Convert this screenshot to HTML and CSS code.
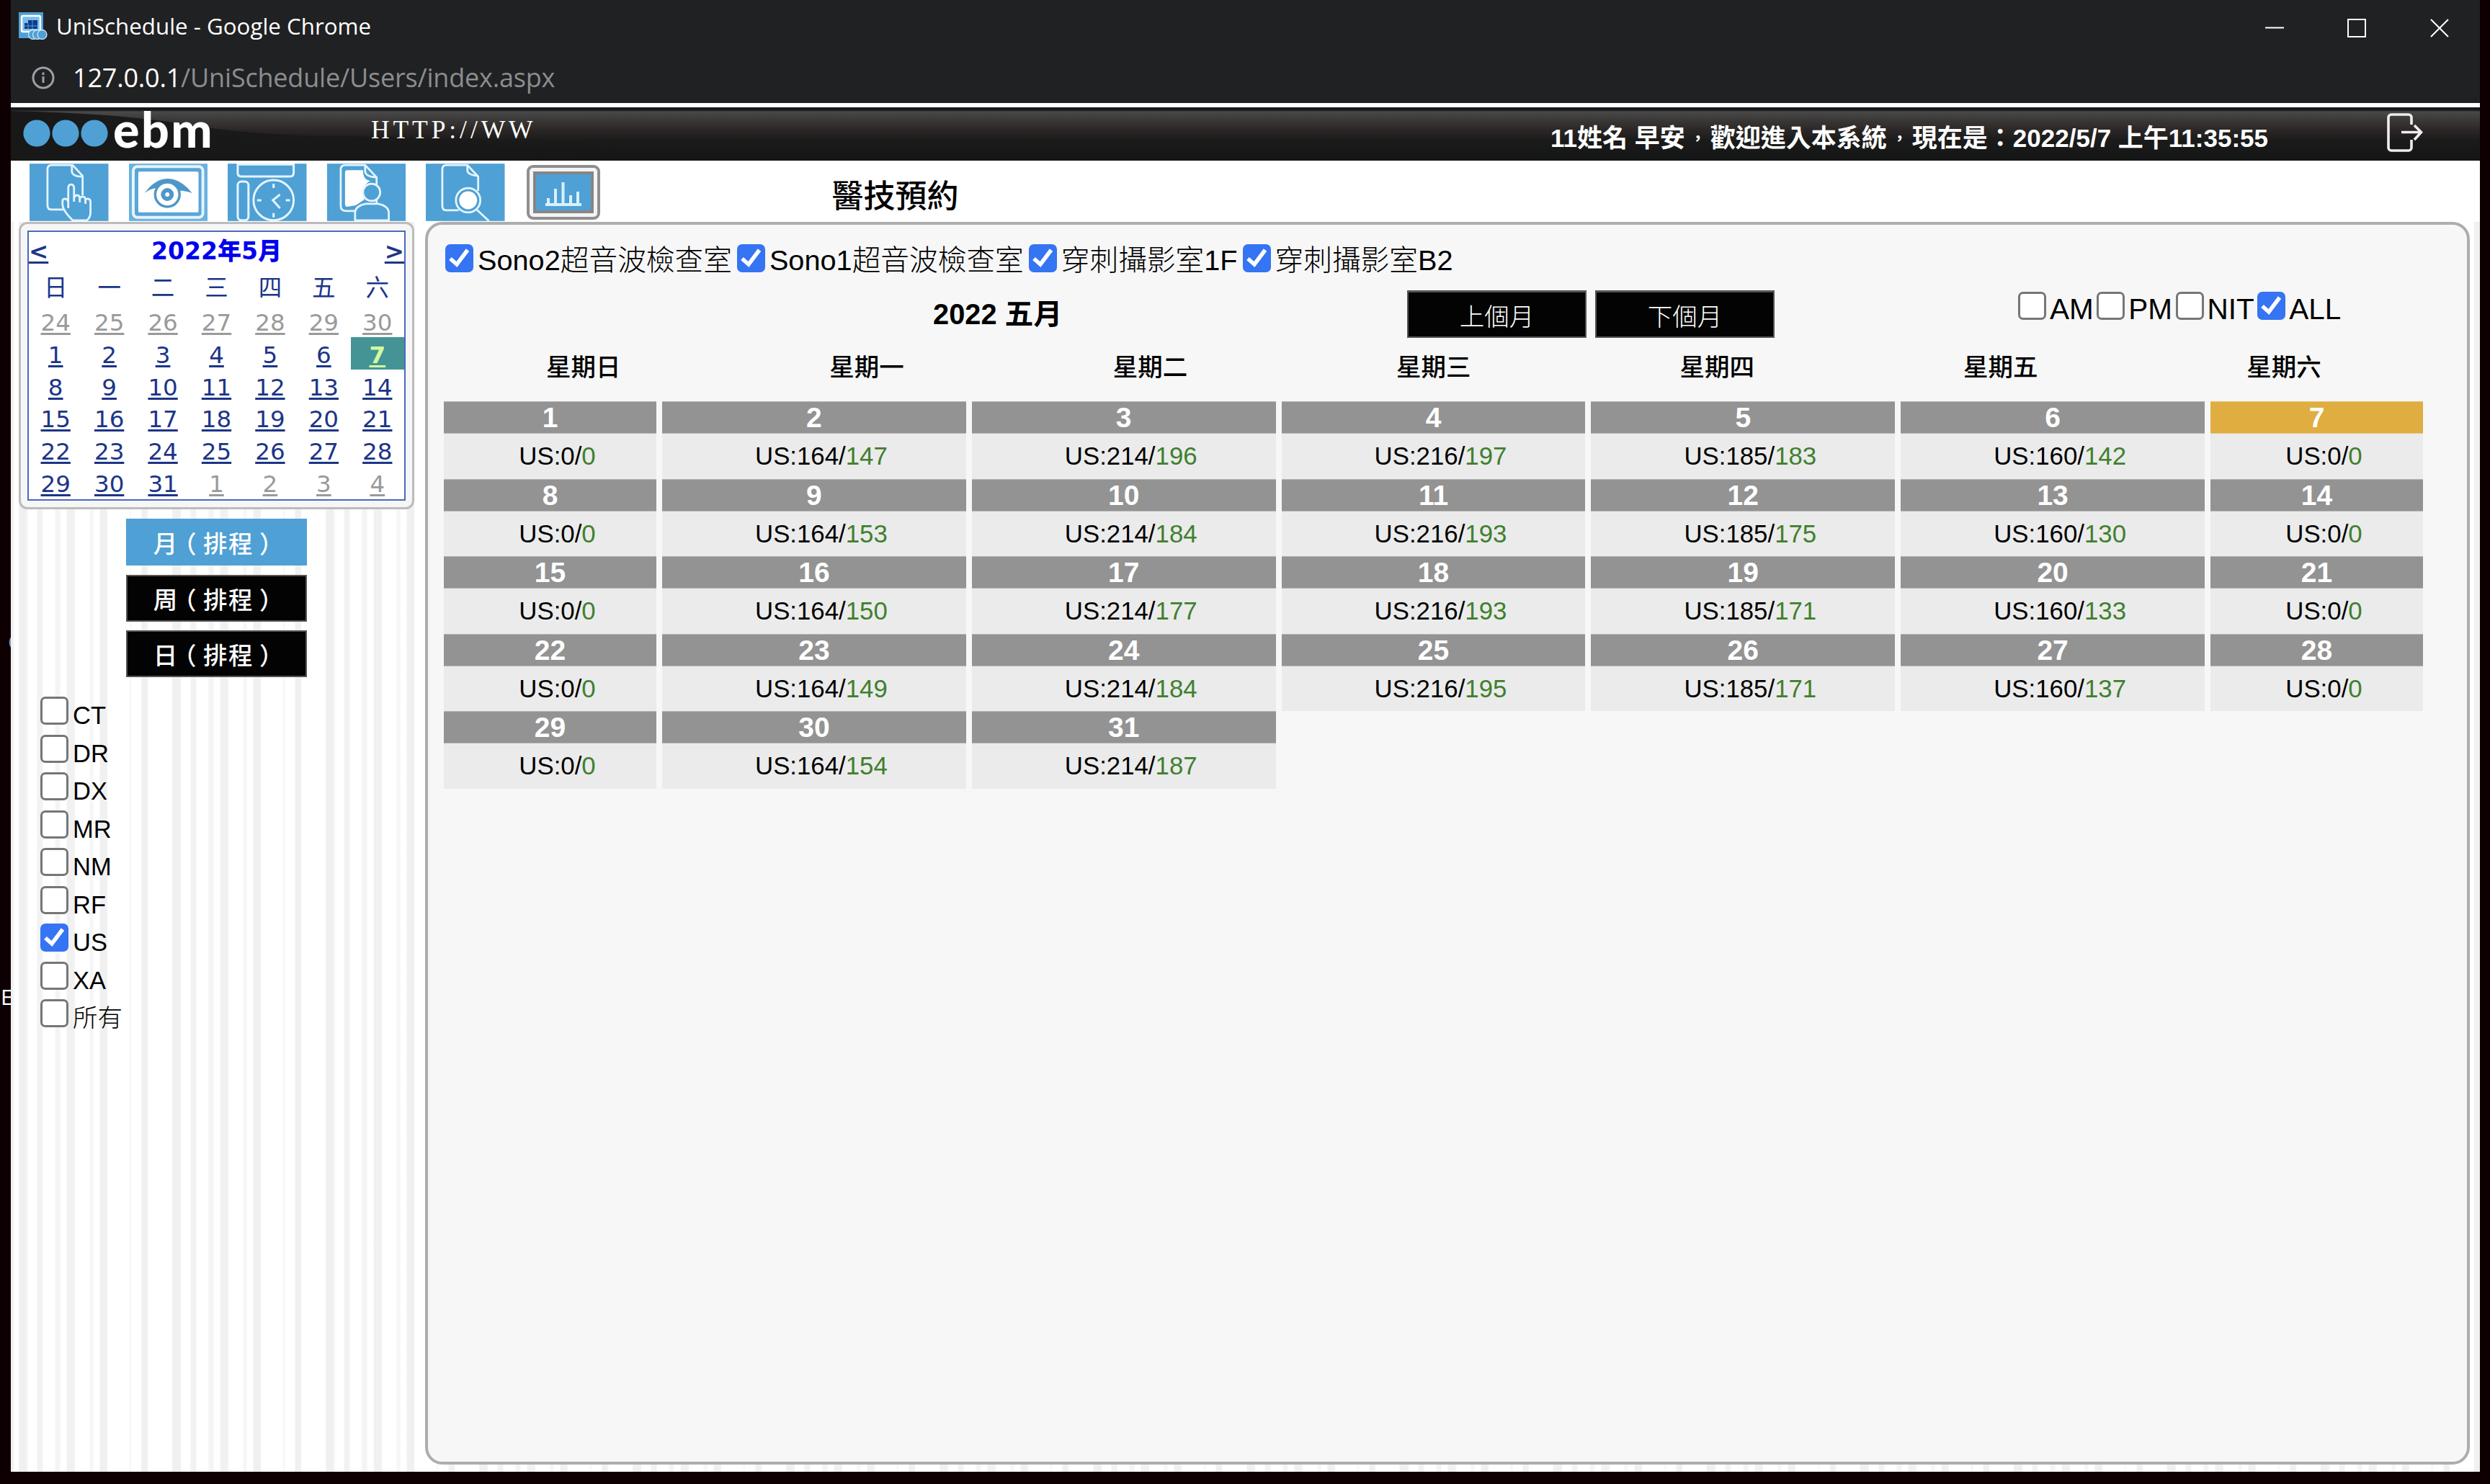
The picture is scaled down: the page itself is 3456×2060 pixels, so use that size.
FILE: index.html
```html
<!DOCTYPE html>
<html lang="zh-TW">
<head>
    <meta charset="UTF-8">
    <title>UniSchedule</title>
    <link rel="stylesheet" href="styles.css">
</head>
<body>
<span class="desk-label desk-c">C</span>
<span class="desk-label desk-e">E</span>
<div class="window">
    <div class="title-bar">
        <svg class="favicon" viewBox="0 0 40 38">
            <rect width="34" height="36" fill="#4fa0d4"/>
            <rect x="4" y="5" width="26" height="22" rx="2" fill="#7cc0e8" stroke="#fff" stroke-width="2.5"/>
            <path d="M13 11h13v12H8v-8h5z" fill="#123a8c"/>
            <path d="M8 19h18M13 15v8M19 11v12" stroke="#4fa0d4" stroke-width="1"/>
            <g fill="#4fa0d4" stroke="#c9e8fa" stroke-width="1.3"><circle cx="20" cy="31" r="6.5"/><circle cx="26" cy="31" r="6.5"/><circle cx="32.5" cy="31" r="6.5"/></g>
        </svg>
        <span class="title-text">UniSchedule - Google Chrome</span>
        <svg class="win-btns" viewBox="0 0 256 26" fill="none" stroke="#fff" stroke-width="2">
            <path d="M0 12.5h26M115 1h24v24h-24zM230 1l24 24M254 1l-24 24"/>
        </svg>
    </div>
    <div class="address-bar">
        <svg class="info" viewBox="0 0 32 32" fill="none" stroke="#9aa0a6" stroke-width="3">
            <circle cx="16" cy="16" r="14"/><path d="M16 14v9M16 8.5v3.5"/>
        </svg>
        <span class="url">127.0.0.1<span class="path">/UniSchedule/Users/index.aspx</span></span>
    </div>
    <div class="header">
        <svg class="gloss" viewBox="0 0 1000 70" preserveAspectRatio="none">
            <defs><linearGradient id="fade" x1="0" x2="1" y1="0" y2="0"><stop offset="0" stop-color="#181818"/><stop offset=".45" stop-color="#181818" stop-opacity=".8"/><stop offset="1" stop-color="#181818" stop-opacity="0"/></linearGradient></defs>
            <path d="M0 0Q150 3 250 20T520 36Q700 44 1000 44V70H0z" fill="url(#fade)"/>
        </svg>
        <div class="logo">
            <svg viewBox="0 0 118 38" fill="#4fa0d4"><circle cx="19" cy="19" r="18.6"/><circle cx="59" cy="19" r="18.6"/><circle cx="99" cy="19" r="18.6"/></svg>
            <span>ebm</span>
        </div>
        <div class="marquee">HTTP://WW</div>
        <div class="welcome">11姓名 早安<span class="dot">，</span>歡迎進入本系統<span class="dot">，</span>現在是：2022/5/7 上午11:35:55</div>
        <svg class="logout" viewBox="0 0 50 54" fill="none" stroke="#eee" stroke-width="3.6">
            <path d="M34 16V6a4 4 0 0 0-4-4H6a4 4 0 0 0-4 4v42a4 4 0 0 0 4 4h24a4 4 0 0 0 4-4V37M20 26.500h27M38 17l9.500 9.500L38 37"/>
        </svg>
    </div>
    <div class="toolbar">
        <svg class="tool" viewBox="0 0 110 80">
            <rect width="110" height="80" fill="#4fa0d4"/>
            <g fill="none" stroke="#e4f5ff" stroke-width="2.800" stroke-linejoin="round">
                <path d="M48 64H31q-6 0-6-6V8q0-6 6-6h29l14 15v27"/><path d="M59 2v9q1 7 14 7"/>
                <path d="M54 62V34q0-5 4-5t4 5v14q1-4 4-4 4 0 4 5 1-3 4-3 4 0 4 5 1-2 3-2 4 0 4 5v14q0 7-5 11H60Q47 66 46 58V52q0-3 4-3 4 1 4 6" fill="#4fa0d4"/>
                <path d="M62 48v5M70 49v5M78 51v5"/>
            </g>
        </svg>
        <svg class="tool" viewBox="0 0 110 80">
            <rect width="110" height="80" fill="#69b1e0"/>
            <rect x="6" y="4" width="97" height="71" rx="6" fill="#5aa5d8" stroke="#e6f4fe" stroke-width="4"/>
            <rect x="13" y="11" width="84" height="57" rx="2" fill="#fff"/>
            <path d="M22 41Q36 21 54 21 72 21 88 41 78 37 70 38L39 34Q31 34 22 41z" fill="#4f97c8"/>
            <circle cx="53.500" cy="43" r="17" fill="#fff" stroke="#4f97c8" stroke-width="3.500"/>
            <circle cx="53.500" cy="43" r="6" fill="#fff" stroke="#4f97c8" stroke-width="6"/>
        </svg>
        <svg class="tool" viewBox="0 0 110 80">
            <rect width="110" height="80" fill="#4fa0d4"/>
            <g fill="none" stroke="#e4f5ff" stroke-width="3">
                <path d="M14 1v12q0 5 5 5h68q5 0 5-5V1z"/><rect x="14" y="25" width="15" height="54" rx="5"/>
                <circle cx="64" cy="51" r="28"/><path d="M64 28v6M64 69v6M41 51h6M81 51h6M73 43l-10 8 10 11"/>
            </g>
        </svg>
        <svg class="tool" viewBox="0 0 110 80">
            <rect width="110" height="80" fill="#4fa0d4"/>
            <path d="M28 9h22q0 14 10 15-10 6-11 18l3 8-12 8-12 2q-3 0-3-4V12q0-3 3-3z" fill="#fff"/>
            <g fill="none" stroke="#e4f5ff" stroke-width="2.800" stroke-linejoin="round">
                <path d="M40 66H27q-8 0-8-7V8q0-6 7-6h27l16 17v37"/><path d="M53 2v9q1 7 15 8"/>
                <circle cx="62" cy="40" r="12" fill="#4fa0d4"/>
                <path d="M39 79V69q0-10 15-13h17q15 3 15 13v10z" fill="#4fa0d4"/>
            </g>
        </svg>
        <svg class="tool" viewBox="0 0 110 80">
            <rect width="110" height="80" fill="#4fa0d4"/>
            <g fill="none" stroke="#e4f5ff" stroke-width="2.800" stroke-linejoin="round">
                <path d="M46 65H29q-6 0-6-6V8q0-6 6-6h29l15 16v20"/><path d="M58 2v8q1 6 15 7"/>
                <circle cx="59" cy="51" r="17" fill="#4fa0d4"/><path d="M71 64l17 16"/>
            </g>
            <circle cx="59" cy="51" r="12.500" fill="#fff"/>
        </svg>
        <svg class="tool chart" viewBox="0 0 104 76">
            <rect x="2" y="2" width="98" height="72" rx="7" fill="#f4f4f4" stroke="#8f8f8f" stroke-width="4"/>
            <rect x="11" y="11" width="80" height="54" fill="#4fa0d4" stroke="#868686" stroke-width="4"/>
            <path d="M26 55h50M30 54v-8M40 54V33M50.500 54V24M61 54V42M71 54V37" fill="none" stroke="#d8f1ff" stroke-width="4"/>
        </svg>
        <div class="page-title">醫技預約</div>
    </div>
    <div class="content">
        <div class="side">
            <div class="cal-card">
                <div class="cal">
                    <div class="cal-head"><a>&lt;</a><b>2022年5月</b><a>&gt;</a></div>
                    <div class="cal-week"><span>日</span><span>一</span><span>二</span><span>三</span><span>四</span><span>五</span><span>六</span></div>
                    <div class="cal-days">
                        <a class="other">24</a><a class="other">25</a><a class="other">26</a><a class="other">27</a><a class="other">28</a><a class="other">29</a><a class="other">30</a>
                        <a>1</a><a>2</a><a>3</a><a>4</a><a>5</a><a>6</a><a class="today">7</a>
                        <a>8</a><a>9</a><a>10</a><a>11</a><a>12</a><a>13</a><a>14</a>
                        <a>15</a><a>16</a><a>17</a><a>18</a><a>19</a><a>20</a><a>21</a>
                        <a>22</a><a>23</a><a>24</a><a>25</a><a>26</a><a>27</a><a>28</a>
                        <a>29</a><a>30</a><a>31</a><a class="other">1</a><a class="other">2</a><a class="other">3</a><a class="other">4</a>
                    </div>
                </div>
            </div>
            <div class="modes">
                <button class="btn active">月<span class="paren">（</span>排程<span class="paren">）</span></button>
                <button class="btn">周<span class="paren">（</span>排程<span class="paren">）</span></button>
                <button class="btn">日<span class="paren">（</span>排程<span class="paren">）</span></button>
            </div>
            <div class="types">
                <label><input type="checkbox"><span>CT</span></label>
                <label><input type="checkbox"><span>DR</span></label>
                <label><input type="checkbox"><span>DX</span></label>
                <label><input type="checkbox"><span>MR</span></label>
                <label><input type="checkbox"><span>NM</span></label>
                <label><input type="checkbox"><span>RF</span></label>
                <label><input type="checkbox" checked><span>US</span></label>
                <label><input type="checkbox"><span>XA</span></label>
                <label><input type="checkbox"><span>所有</span></label>
            </div>
        </div>
        <div class="panel">
            <div class="rooms">
                <label><input type="checkbox" checked><span>Sono2超音波檢查室</span></label>
                <label><input type="checkbox" checked><span>Sono1超音波檢查室</span></label>
                <label><input type="checkbox" checked><span>穿刺攝影室1F</span></label>
                <label><input type="checkbox" checked><span>穿刺攝影室B2</span></label>
            </div>
            <div class="controls">
                <div class="month">2022 五月</div>
                <div class="nav">
                    <button class="btn">上個月</button>
                    <button class="btn">下個月</button>
                </div>
                <div class="shifts">
                    <label><input type="checkbox"><span>AM</span></label>
                    <label><input type="checkbox"><span>PM</span></label>
                    <label><input type="checkbox"><span>NIT</span></label>
                    <label><input type="checkbox" checked><span>ALL</span></label>
                </div>
            </div>
            <div class="weekdays"><span>星期日</span><span>星期一</span><span>星期二</span><span>星期三</span><span>星期四</span><span>星期五</span><span>星期六</span></div>
            <div class="days">
                <div class="day"><b>1</b><p>US:0/<i>0</i></p></div>
                <div class="day"><b>2</b><p>US:164/<i>147</i></p></div>
                <div class="day"><b>3</b><p>US:214/<i>196</i></p></div>
                <div class="day"><b>4</b><p>US:216/<i>197</i></p></div>
                <div class="day"><b>5</b><p>US:185/<i>183</i></p></div>
                <div class="day"><b>6</b><p>US:160/<i>142</i></p></div>
                <div class="day now"><b>7</b><p>US:0/<i>0</i></p></div>
                <div class="day"><b>8</b><p>US:0/<i>0</i></p></div>
                <div class="day"><b>9</b><p>US:164/<i>153</i></p></div>
                <div class="day"><b>10</b><p>US:214/<i>184</i></p></div>
                <div class="day"><b>11</b><p>US:216/<i>193</i></p></div>
                <div class="day"><b>12</b><p>US:185/<i>175</i></p></div>
                <div class="day"><b>13</b><p>US:160/<i>130</i></p></div>
                <div class="day"><b>14</b><p>US:0/<i>0</i></p></div>
                <div class="day"><b>15</b><p>US:0/<i>0</i></p></div>
                <div class="day"><b>16</b><p>US:164/<i>150</i></p></div>
                <div class="day"><b>17</b><p>US:214/<i>177</i></p></div>
                <div class="day"><b>18</b><p>US:216/<i>193</i></p></div>
                <div class="day"><b>19</b><p>US:185/<i>171</i></p></div>
                <div class="day"><b>20</b><p>US:160/<i>133</i></p></div>
                <div class="day"><b>21</b><p>US:0/<i>0</i></p></div>
                <div class="day"><b>22</b><p>US:0/<i>0</i></p></div>
                <div class="day"><b>23</b><p>US:164/<i>149</i></p></div>
                <div class="day"><b>24</b><p>US:214/<i>184</i></p></div>
                <div class="day"><b>25</b><p>US:216/<i>195</i></p></div>
                <div class="day"><b>26</b><p>US:185/<i>171</i></p></div>
                <div class="day"><b>27</b><p>US:160/<i>137</i></p></div>
                <div class="day"><b>28</b><p>US:0/<i>0</i></p></div>
                <div class="day"><b>29</b><p>US:0/<i>0</i></p></div>
                <div class="day"><b>30</b><p>US:164/<i>154</i></p></div>
                <div class="day"><b>31</b><p>US:214/<i>187</i></p></div>
            </div>
        </div>
    </div>
</div>
</body>
</html>
```
FILE: styles.css
```css
*{
    box-sizing: border-box;
}
body{
    margin: 0;
    height: 2060px;
    padding: 0 14px 17px 15px;
    background: #0e0002;
    font-family: "Liberation Sans", "Noto Sans CJK TC", sans-serif;
    overflow: hidden;
    position: relative;
}
svg{
    display: block;
    flex: none;
}
/* desktop icons peeking out behind the window */
.desk-label{
    position: absolute;
    color: #ffffff;
    font: 30px/30px "Open Sans", sans-serif;
}
.desk-c{
    left: 11px;
    top: 876px;
    color: #8a9aa8;
}
.desk-e{
    left: 1px;
    top: 1369px;
}
.window{
    height: 2043px;
    background: #ffffff;
    display: flex;
    flex-direction: column;
    position: relative;
}
.title-bar{
    height: 72px;
    background: #202123;
    display: flex;
    align-items: center;
    padding: 0 42px 0 11px;
}
.title-bar .favicon{
    width: 40px;
    height: 38px;
}
.title-bar .title-text{
    color: #ffffff;
    font: 31.300px/40px "Open Sans", sans-serif;
    margin-left: 12px;
    flex: 1;
}
.title-bar .win-btns{
    width: 256px;
    height: 26px;
    margin-top: 5px;
}
.address-bar{
    height: 71px;
    background: #202123;
    display: flex;
    align-items: center;
    padding-left: 29px;
}
.address-bar .info{
    width: 32px;
    height: 32px;
}
.address-bar .url{
    color: #ffffff;
    font: 36px/50px "Open Sans", sans-serif;
    letter-spacing: -0.200px;
    margin-left: 25px;
}
.address-bar .path{
    color: #8b8d90;
}
.header{
    height: 80px;
    border-top: 6px solid #ffffff;
    background: linear-gradient(#18191b 0, #18191b 4px, #48494a 6px, #3a3836 18px, #2a2625 32px, #1b1b1b 46px, #141515 73px);
    position: relative;
    display: flex;
    align-items: center;
}
.header .gloss{
    position: absolute;
    left: 0;
    top: 5px;
    width: 1000px;
    height: 69px;
}
.header .logo{
    width: 500px;
    padding-left: 17px;
    display: flex;
    align-items: center;
    position: relative;
}
.header .logo svg{
    width: 118px;
    height: 38px;
    margin-top: -3px;
}
.header .logo span{
    color: #ffffff;
    font: 900 68px/60px Lato, sans-serif;
    letter-spacing: 2.500px;
    margin: -14px 0 0 7px;
}
.header .marquee{
    color: #ffffff;
    font: 35.500px/40px "Liberation Serif", serif;
    letter-spacing: 4.900px;
    margin-top: -13px;
    position: relative;
}
.header .welcome{
    color: #ffffff;
    font-size: 35px;
    font-weight: bold;
    line-height: 44px;
    margin: 12px 165px 0 auto;
    white-space: nowrap;
}
.header .dot{
    display: inline-block;
    transform: scale(.65);
}
.header .logout{
    width: 50px;
    height: 54px;
    margin: -4px 79px 0 0;
}
.toolbar{
    height: 85px;
    display: flex;
    align-items: center;
    padding-left: 26px;
    gap: 28px;
}
.toolbar .tool{
    width: 109.500px;
    height: 80px;
    margin-top: 3px;
}
.toolbar .chart{
    width: 104px;
    height: 76px;
    margin: 2px 0 0 2px;
}
.toolbar .page-title{
    font-size: 44px;
    font-weight: 500;
    margin: 7px 0 0 292px;
}
.content{
    flex: 1;
    display: flex;
    padding: 0 14px 10px 11px;
    background: repeating-linear-gradient(90deg, #f0f0f0 0 11px, #fff 13px 25px, #f2f2f2 26px 33px, #fff 34px 50px, #f4f4f4 51px 57px, #fff 58px 66px, #f1f1f1 67px 77px, #fff 79px 98px, #f6f6f6 99px 103px, #fff 104px 112px, #f0f0f0 113px 122px, #fff 124px 153px, #f8f8f8 154px 156px, #fff 157px 170px, #f0f0f0 171px 178px, #fff 180px 213px) 11px 0;
}
.side{
    width: 549px;
    margin-right: 15px;
}
.cal-card{
    height: 399px;
    padding: 9px;
    border: 3px solid #bcbcbc;
    border-radius: 12px;
    background: #f6f6f6;
}
.cal{
    height: 375px;
    border: 2px solid #4a68c0;
    background: #ffffff;
    font-family: "DejaVu Sans", "Noto Sans CJK TC", sans-serif;
    font-size: 32.500px;
    color: #1c3588;
}
.cal-head{
    height: 51px;
    display: flex;
    justify-content: space-between;
    font-weight: bold;
    line-height: 54px;
}
.cal-head b{
    color: #0000ee;
    font-size: 33px;
}
.cal a{
    text-decoration: underline;
    text-decoration-thickness: 3px;
    text-underline-offset: 3px;
}
.cal-week{
    display: grid;
    grid-template-columns: repeat(7, 1fr);
    height: 50px;
    line-height: 54px;
    text-align: center;
}
.cal-days{
    display: grid;
    grid-template-columns: repeat(7, 1fr);
    grid-auto-rows: 44.800px;
    line-height: 50px;
    text-align: center;
}
.cal-days .other{
    color: #9a9a9a;
}
.cal-days .today{
    background: #449496;
    color: #d2fba0;
    font-weight: bold;
}
.btn{
    width: 251px;
    height: 65px;
    border: 2px solid #555555;
    border-radius: 0;
    background: #030303;
    color: #ffffff;
    font-family: "Liberation Sans", "Noto Sans CJK TC", sans-serif;
    font-size: 33.500px;
    padding: 0;
}
.modes{
    display: flex;
    flex-direction: column;
    align-items: center;
    gap: 12.500px;
    padding-top: 13px;
}
.modes .btn{
    font-weight: 500;
    letter-spacing: 1.500px;
    padding-right: 2px;
}
/* half-width brackets, centred in a full-width cell */
.modes .paren{
    font-feature-settings: "halt";
    margin: 0 8px;
}
.modes .active{
    background: #4fa0d4;
    border-color: #4fa0d4;
}
.types{
    padding: 26px 0 0 30px;
}
label{
    display: flex;
    white-space: nowrap;
}
input{
    appearance: none;
    flex: none;
    width: 39px;
    height: 39px;
    margin: 0;
    border: 3px solid #767676;
    border-radius: 7px;
    background: #ffffff;
}
input:checked{
    border: 0;
    background: #3574f2 url("data:image/svg+xml,%3Csvg xmlns='http://www.w3.org/2000/svg' viewBox='0 0 39 39'%3E%3Cpath d='M7 20l9 8L31 8' fill='none' stroke='white' stroke-width='5.500'/%3E%3C/svg%3E");
}
.types label{
    height: 52.500px;
    font-size: 34.500px;
    line-height: 52px;
    gap: 6px;
    padding-top: 1px;
}
.types span, .rooms span, .shifts span{
    font-weight: 300;
}
.panel{
    flex: 1;
    border: 4px solid #adadad;
    border-radius: 24px;
    background: #f7f7f7;
    padding: 27px 0 0 22px;
}
.rooms{
    display: flex;
    gap: 7px;
    padding-left: 2px;
}
.rooms label{
    font-size: 39.700px;
    line-height: 45px;
    gap: 6px;
    height: 39px;
}
.controls{
    display: flex;
    height: 66px;
    margin-top: 25px;
}
.controls .month{
    width: 1337px;
    padding-left: 679px;
    font-size: 39.800px;
    font-weight: bold;
    line-height: 67px;
}
.controls .nav{
    display: flex;
    gap: 12px;
}
.controls .nav .btn{
    width: 249px;
    height: 66px;
    font-weight: 300;
    border-width: 3px 2px 2px;
    font-size: 34.500px;
}
.shifts{
    display: flex;
    gap: 4.500px;
    margin-left: 338px;
    padding-top: 2px;
}
.shifts label{
    font-size: 40.500px;
    line-height: 49px;
    gap: 5px;
}
.weekdays{
    display: grid;
    grid-template-columns: repeat(7, 393.400px);
    margin: 16px 0 0 -3px;
    font-size: 34.500px;
    font-weight: 500;
    line-height: 51px;
    height: 50px;
    text-align: center;
}
.days{
    width: 2747px;
    display: grid;
    grid-template-columns: 295px repeat(5, 1fr) 295px;
    grid-auto-rows: 107.500px;
    column-gap: 8px;
    margin-top: 22px;
    text-align: center;
}
.day{
    background: #ebebeb;
}
.day b{
    display: block;
    height: 45px;
    border: solid #b4b4b4;
    border-width: 1px 0;
    background: #939393;
    color: #ffffff;
    font-size: 39px;
    line-height: 44px;
}
.day p{
    margin: 0;
    padding-left: 20px;
    font-size: 34.800px;
    line-height: 62px;
}
.day i{
    color: #40802e;
    font-style: normal;
}
.now b{
    background: #dfad40;
    border-color: #e6c57c;
}
```
